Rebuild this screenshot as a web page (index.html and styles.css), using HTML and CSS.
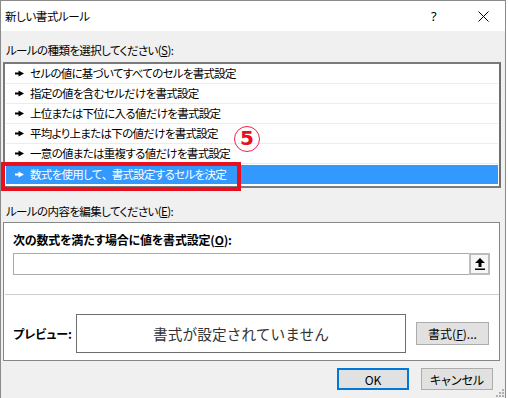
FILE: index.html
```html
<!DOCTYPE html>
<html lang="ja">
<head>
<meta charset="utf-8">
<title>新しい書式ルール</title>
<link rel="stylesheet" href="styles.css">
</head>
<body>
<div class="window">
  <div class="titlebar">
    <span class="title">新しい書式ルール</span>
    <span class="help">?</span>
    <span class="close"><svg width="11" height="11" viewBox="0 0 11 11"><path d="M0.5 0.5 L10.5 10.5 M10.5 0.5 L0.5 10.5" stroke="#000" stroke-width="1" fill="none"/></svg></span>
  </div>
  <div class="content">
    <div class="label first">ルールの種類を選択してください(<u>S</u>):</div>
    <div class="listbox">
      <div class="row"><svg class="arr" width="9" height="7" viewBox="0 0 9 7"><path d="M0 2.5 H4 V4.5 H0 Z M3.5 0.5 L9 3.5 L3.5 6.5 Z" fill="#000"/></svg>セルの値に基づいてすべてのセルを書式設定</div>
      <div class="row"><svg class="arr" width="9" height="7" viewBox="0 0 9 7"><path d="M0 2.5 H4 V4.5 H0 Z M3.5 0.5 L9 3.5 L3.5 6.5 Z" fill="#000"/></svg>指定の値を含むセルだけを書式設定</div>
      <div class="row"><svg class="arr" width="9" height="7" viewBox="0 0 9 7"><path d="M0 2.5 H4 V4.5 H0 Z M3.5 0.5 L9 3.5 L3.5 6.5 Z" fill="#000"/></svg>上位または下位に入る値だけを書式設定</div>
      <div class="row"><svg class="arr" width="9" height="7" viewBox="0 0 9 7"><path d="M0 2.5 H4 V4.5 H0 Z M3.5 0.5 L9 3.5 L3.5 6.5 Z" fill="#000"/></svg>平均より上または下の値だけを書式設定</div>
      <div class="row"><svg class="arr" width="9" height="7" viewBox="0 0 9 7"><path d="M0 2.5 H4 V4.5 H0 Z M3.5 0.5 L9 3.5 L3.5 6.5 Z" fill="#000"/></svg>一意の値または重複する値だけを書式設定</div>
      <div class="row selected"><svg class="arr" width="9" height="7" viewBox="0 0 9 7"><path d="M0 2.5 H4 V4.5 H0 Z M3.5 0.5 L9 3.5 L3.5 6.5 Z" fill="#fff"/></svg>数式を使用して<span class="wide">、</span>書式設定するセルを決定</div>
    </div>
    <div class="label second">ルールの内容を編集してください(<u>E</u>):</div>
    <div class="panel">
      <div class="formula-label">次の数式を満たす場合に値を書式設定(<u>O</u>):</div>
      <div class="input">
        <div class="pick"><svg width="10" height="12" viewBox="0 0 10 12"><path d="M5 0 L10 5 H6.5 V9 H3.5 V5 H0 Z M0 10.5 H10 V12 H0 Z" fill="#000"/></svg></div>
      </div>
      <div class="divider"></div>
      <div class="preview-row">
        <div class="preview-label">プレビュー:</div>
        <div class="preview-box">書式が設定されていません</div>
        <div class="btn format">書式(<u>F</u>)...</div>
      </div>
    </div>
    <div class="buttons">
      <div class="btn ok">OK</div>
      <div class="btn cancel">キャンセル</div>
    </div>
  </div>
  <div class="grip"><svg width="8" height="8" viewBox="0 0 8 8"><g fill="#b0b0b0"><rect x="6" y="0" width="2" height="2"/><rect x="3" y="3" width="2" height="2"/><rect x="6" y="3" width="2" height="2"/><rect x="0" y="6" width="2" height="2"/><rect x="3" y="6" width="2" height="2"/><rect x="6" y="6" width="2" height="2"/></g></svg></div>
  <div class="highlight"></div>
  <div class="step">5</div>
</div>
</body>
</html>
```
FILE: styles.css
```css
html, body {
  margin: 0;
  padding: 0;
  background: #ffffff;
}
body {
  font-family: "Noto Sans CJK JP", "Noto Sans", sans-serif;
  font-feature-settings: "palt";
  font-size: 12px;
  color: #000;
}
.window {
  position: relative;
  width: 506px;
  height: 398px;
  box-sizing: border-box;
  border: 1px solid #8a8a8a;
  border-bottom: none;
  background: #f0f0f0;
  overflow: hidden;
}
.titlebar {
  height: 30px;
  background: #fff;
  display: flex;
  align-items: center;
  padding-left: 4px;
}
.title {
  flex: 1;
  font-size: 11.5px;
  letter-spacing: -0.4px;
  line-height: 16px;
}
.help {
  font-size: 13px;
  width: 12px;
  margin-right: 35px;
  font-family: "Noto Sans", sans-serif;
}
.close {
  display: flex;
  margin-right: 16px;
}
.content {
  padding: 0 4px 0 2px;
}
.label {
  line-height: 16px;
  height: 16px;
  padding-left: 3px;
  font-size: 11.5px;
  letter-spacing: -0.6px;
}
.label.first {
  margin-top: 11px;
}
.label.second {
  margin-top: 15px;
}
.listbox {
  margin-top: 4px;
  height: 126px;
  box-sizing: border-box;
  border: 2px solid #7a7a7a;
  border-right-color: #6e6e6e;
  background: #fff;
  padding: 0 1px 0 1px;
}
.row {
  height: 19px;
  border-bottom: 1px solid #ececec;
  display: flex;
  align-items: center;
  line-height: 19px;
  white-space: nowrap;
  font-size: 11.5px;
  letter-spacing: -0.7px;
}
.row .arr {
  margin: 0 6px 0 9px;
  flex: none;
}
.row .wide {
  font-feature-settings: normal;
  letter-spacing: -1.5px;
}
.row.selected {
  margin-top: 1px;
  background: #3399ff;
  color: #fff;
  border-bottom: none;
}
.panel {
  margin-top: 3px;
  height: 139px;
  box-sizing: border-box;
  border: 1px solid #868686;
  background: #fff;
  margin-right: 1px;
  display: flex;
  flex-direction: column;
}
.formula-label {
  font-weight: bold;
  line-height: 16px;
  margin: 9px 0 0 9px;
  letter-spacing: -0.2px;
}
.input {
  margin: 5px 9px 0 9px;
  height: 22px;
  box-sizing: border-box;
  border: 1px solid #ababab;
  display: flex;
  justify-content: flex-end;
}
.pick {
  margin: -1px -1px -1px 0;
  width: 21px;
  box-sizing: border-box;
  border: 2px solid #bcbcbc;
  background: #f6f6f6;
  display: flex;
  align-items: center;
  justify-content: center;
}
.divider {
  margin-top: 19px;
  height: 1px;
  background: #cdcdcd;
  margin-left: 1px;
}
.preview-row {
  display: flex;
  align-items: center;
  margin-top: 19px;
  padding-left: 9px;
}
.preview-label {
  font-weight: bold;
  width: 63px;
}
.preview-box {
  width: 330px;
  height: 39px;
  box-sizing: border-box;
  border: 1px solid #6e6e6e;
  display: flex;
  align-items: center;
  justify-content: center;
  font-feature-settings: normal;
  font-size: 14.67px;
  color: #333;
  letter-spacing: 0.1px;
}
.btn {
  box-sizing: border-box;
  border: 1px solid #adadad;
  background: #e1e1e1;
  display: flex;
  align-items: center;
  justify-content: center;
}
.btn.format {
  margin-left: 10px;
  width: 73px;
  height: 23px;
}
.buttons {
  display: flex;
  justify-content: flex-end;
  gap: 12px;
  margin-top: 7px;
  padding-right: 8px;
}
.btn.ok,
.btn.cancel {
  width: 72px;
  height: 22px;
}
.btn.ok {
  border: 2px solid #0078d7;
}
.grip {
  position: absolute;
  right: 1px;
  bottom: 1px;
  display: flex;
}
.highlight {
  position: absolute;
  left: 0;
  top: 161px;
  width: 240px;
  height: 29px;
  box-sizing: border-box;
  border: 4px solid #e8101e;
}
.step {
  position: absolute;
  left: 233px;
  top: 125px;
  width: 26px;
  height: 26px;
  box-sizing: border-box;
  border: 1.5px solid #f0204a;
  border-radius: 50%;
  color: #e8101e;
  font-family: "DejaVu Sans", sans-serif;
  font-weight: bold;
  font-size: 20px;
  line-height: 23px;
  text-align: center;
}
```
